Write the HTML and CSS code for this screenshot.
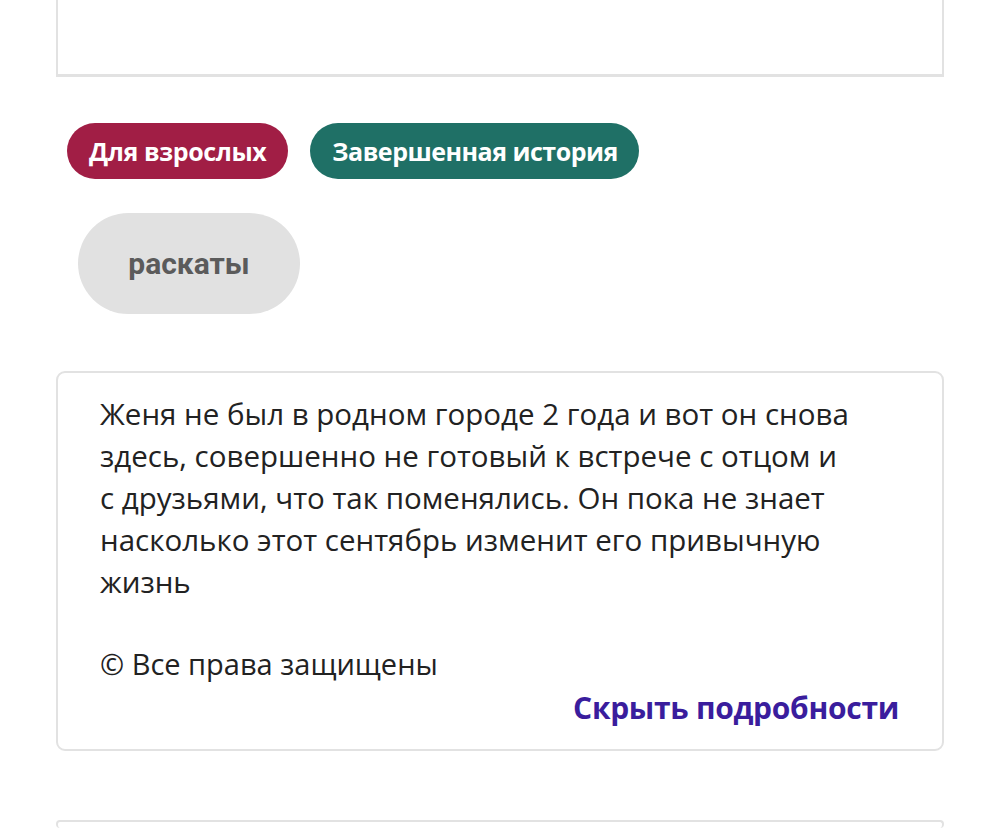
FILE: index.html
```html
<!DOCTYPE html>
<html lang="ru">
<head>
<meta charset="utf-8">
<title>Описание</title>
<link rel="stylesheet" href="styles.css">
</head>
<body>
<div class="page">
  <div class="card card-top"></div>
  <div class="badges">
    <span class="badge badge-adult">Для взрослых</span>
    <span class="badge badge-done">Завершенная история</span>
  </div>
  <div class="tags">
    <span class="tag">раскаты</span>
  </div>
  <div class="card card-desc">
    <p class="desc">Женя не был в родном городе 2 года и вот он снова здесь, совершенно не готовый к встрече с отцом и с друзьями, что так поменялись. Он пока не знает насколько этот сентябрь изменит его привычную жизнь</p>
    <p class="copy">© Все права защищены</p>
    <div class="actions"><a class="toggle">Скрыть подробности</a></div>
  </div>
  <div class="card card-next"></div>
</div>
</body>
</html>
```

FILE: styles.css
```css
html, body {
  margin: 0;
  padding: 0;
  background: #ffffff;
}
body {
  font-family: "Open Sans", "Noto Sans", sans-serif;
  color: #222222;
  overflow: hidden;
  height: 828px;
}
.page {
  padding: 0 56px;
  display: flex;
  flex-direction: column;
}
.card {
  border: 2px solid #e2e2e2;
  background: #fff;
  box-sizing: border-box;
}
.card-top {
  border-top: none;
  height: 77px;
  border-bottom-width: 3px;
}
.badges {
  display: flex;
  gap: 22px;
  margin-top: 46px;
  padding-left: 11px;
}
.badge {
  display: inline-flex;
  align-items: center;
  height: 56px;
  padding: 0 22px;
  border-radius: 28px;
  color: #fff;
  font-weight: 700;
  font-size: 25px;
  letter-spacing: -0.4px;
}
.badge-adult { background: #a11e45; }
.badge-done { background: #1f7066; padding: 0 21px 0 22px; letter-spacing: -0.5px; }
.tags {
  display: flex;
  margin-top: 34px;
  padding-left: 22px;
}
.tag {
  display: inline-flex;
  align-items: center;
  justify-content: center;
  width: 222px;
  height: 101px;
  border-radius: 51px;
  background: #e1e1e1;
  color: #5b5b5b;
  font-family: Roboto, "Noto Sans", sans-serif;
  font-weight: 700;
  font-size: 30px;
}
.card-desc {
  margin-top: 57px;
  border-radius: 9px;
  padding: 20px 43px 22px 42px;
  height: 380px;
}
.desc {
  margin: 0;
  max-width: 756px;
  font-size: 29.5px;
  line-height: 42px;
}
.copy {
  margin: 39px 0 0;
  font-size: 29px;
  line-height: 43px;
}
.actions {
  display: flex;
  justify-content: flex-end;
  margin-top: 3px;
}
.toggle {
  color: #3a1d9d;
  font-weight: 700;
  font-size: 30px;
  line-height: 40px;
  letter-spacing: -0.3px;
}
.card-next {
  margin-top: 69px;
  border-radius: 9px;
  height: 8px;
  border-bottom: none;
}
```
